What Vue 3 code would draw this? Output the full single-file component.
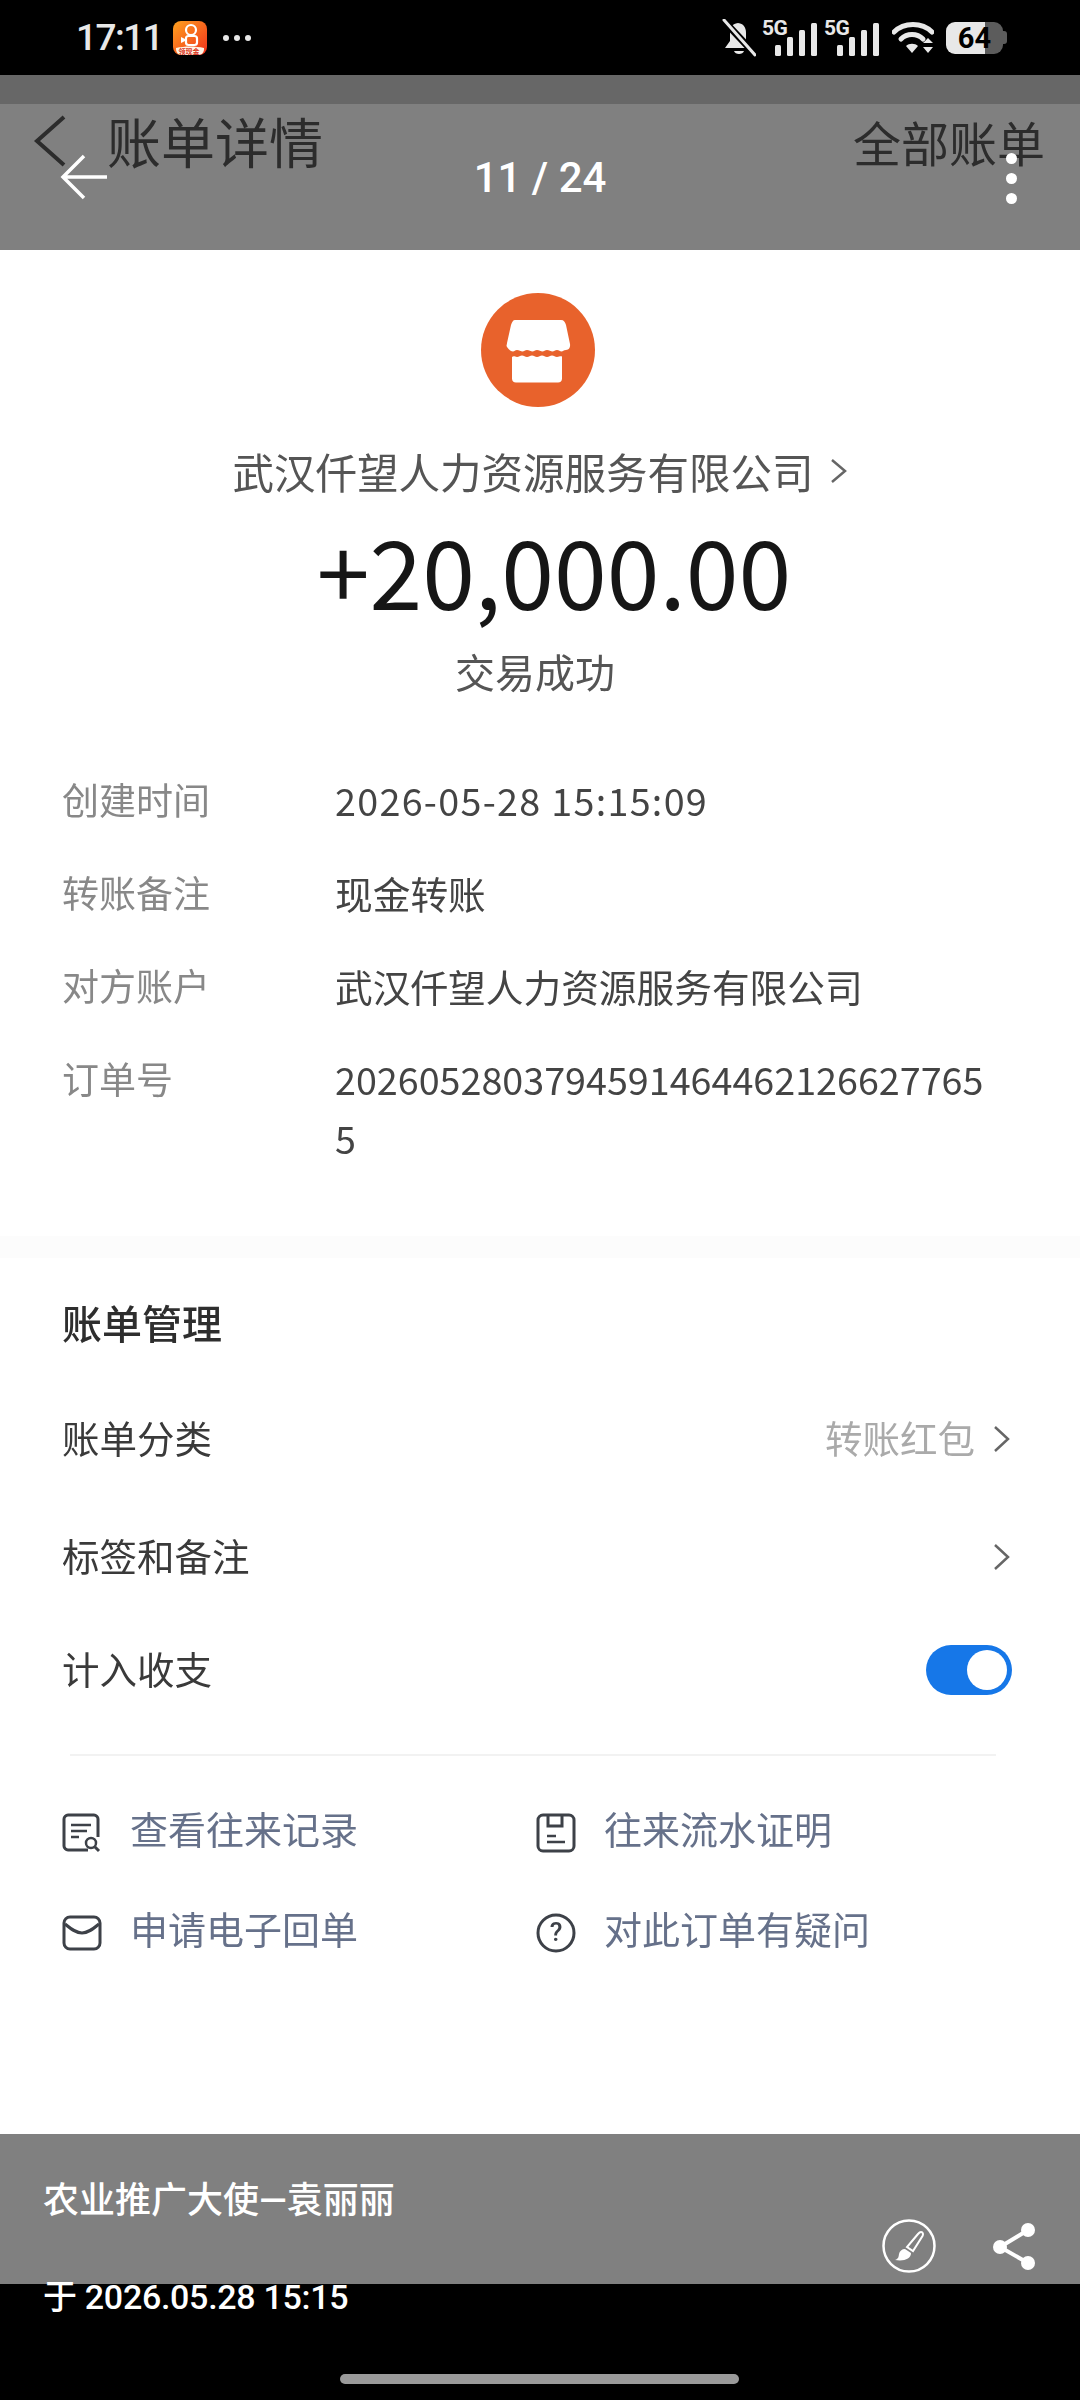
<script setup>
const details = [
  { label: '创建时间', value: '2026-05-28 15:15:09', wide: true },
  { label: '转账备注', value: '现金转账' },
  { label: '对方账户', value: '武汉仟望人力资源服务有限公司' },
  { label: '订单号', value: '20260528037945914644621266277655' }
]
</script>

<template>
  <div class="phone">
    <div class="status">
      <div class="status-left">
        <span class="clock">17:11</span>
        <svg class="app" viewBox="0 0 34 34">
          <defs>
            <linearGradient id="appg" x1="0" y1="0" x2="1" y2="1">
              <stop offset="0" stop-color="#ffa21f" />
              <stop offset="1" stop-color="#f0301c" />
            </linearGradient>
          </defs>
          <rect width="34" height="34" rx="8" fill="url(#appg)" />
          <circle cx="18" cy="9" r="5" fill="none" stroke="#fff" stroke-width="2.200" />
          <rect x="13" y="15" width="11" height="9" rx="2.500" fill="none" stroke="#fff" stroke-width="2.200" />
          <path d="M12 18l-4-2v6l4-2z" fill="#fff" />
          <path d="M3 27c9-2 19-2 28 0v1c0 3-2 6-6 6H9c-4 0-6-3-6-6z" fill="#fff4e6" />
          <text x="16" y="33" text-anchor="middle" class="app-label">领现金</text>
        </svg>
        <span class="more"><i></i><i></i><i></i></span>
      </div>
      <div class="status-right">
        <svg class="bell" viewBox="0 0 34 38">
          <path d="M17 4c-6 0-9 4-9 10v8l-5 7h26l-5-7v-8c0-6-3-10-9-10z" fill="#e8e8e8" />
          <path d="M12 32h10c-1 4-9 4-10 0z" fill="#e8e8e8" />
          <path d="M1 1l32 34" stroke="#000" stroke-width="7" />
          <path d="M2 1l31 35" stroke="#e8e8e8" stroke-width="3" stroke-linecap="round" />
        </svg>
        <div class="net">
          <span class="fiveg">5G</span>
          <svg class="bars" viewBox="0 0 42 33"><rect x="0" y="22" width="6" height="11" rx="1.5" /><rect x="12" y="14" width="6" height="19" rx="1.5" /><rect x="24" y="7" width="6" height="26" rx="1.5" /><rect x="36" y="0" width="6" height="33" rx="1.5" /></svg>
        </div>
        <div class="net">
          <span class="fiveg">5G</span>
          <svg class="bars" viewBox="0 0 42 33"><rect x="0" y="22" width="6" height="11" rx="1.5" /><rect x="12" y="14" width="6" height="19" rx="1.5" /><rect x="24" y="7" width="6" height="26" rx="1.5" /><rect x="36" y="0" width="6" height="33" rx="1.5" /></svg>
        </div>
        <svg class="wifi" viewBox="0 0 42 33">
          <path d="M2 11C12 1 30 1 40 11" fill="none" stroke="#e8e8e8" stroke-width="5" stroke-linecap="round" />
          <path d="M9 18c6-6 16-6 22 0" fill="none" stroke="#e8e8e8" stroke-width="5" stroke-linecap="round" />
          <path d="M14 25c3-3 9-3 12 0l-6 7z" fill="#e8e8e8" />
          <path d="M31 22l5-5 5 5zM31 26l5 6 5-6z" fill="#e8e8e8" />
        </svg>
        <div class="battery">
          <div class="batt-body"><span class="batt-num">64</span></div>
          <div class="batt-tip"></div>
        </div>
      </div>
    </div>

    <div class="dim-strip"></div>

    <header class="shot-head">
      <div class="shot-head-inner">
        <svg class="shot-back" viewBox="0 0 34 52"><path d="M31 2L4 26l27 24" fill="none" stroke="#2c2c2c" stroke-width="4" /></svg>
        <span class="shot-title">账单详情</span>
        <span class="shot-all">全部账单</span>
      </div>
    </header>

    <main class="shot">
      <section class="hero">
        <svg class="store" viewBox="0 0 114 114">
          <circle cx="57" cy="57" r="57" fill="#e8622c" />
          <path d="M34 27h46c3 0 4 2 5 5l4 19c.5 3-1 6-4 6-2.500 0-3 1.500-4.500 1.500S78 57 76 57s-3 1.500-4.500 1.500S68 57 66 57s-3 1.500-4.500 1.500S58 57 56 57s-3 1.500-4.500 1.500S48 57 46 57s-3 1.500-4.500 1.500S38 57 36 57s-2.500 1.500-4 1.500S28 57 26 54c-1-2 0-2 0-4l4-18c1-3 2-5 4-5z" fill="#fff" />
          <path d="M31 64c2-1.500 3 0 5 0s3-1.500 5-1.500 3 1.500 5 1.500 3-1.500 5-1.500 3 1.500 5 1.500 3-1.500 5-1.500 3 1.500 5 1.500 3-1.500 5-1.500 3 1.500 5 1.500 3-1 5-.5v22c0 2.500-1.500 4-4 4H35c-2.500 0-4-1.500-4-4z" fill="#fff" />
        </svg>
        <div class="company">
          <span>武汉仟望人力资源服务有限公司</span>
          <svg class="company-chev" viewBox="0 0 18 28"><path d="M2 3l13 11L2 25" fill="none" stroke="#666" stroke-width="2.500" /></svg>
        </div>
        <div class="amount">+20,000.00</div>
        <div class="result">交易成功</div>
      </section>

      <section class="details">
        <div v-for="d in details" :key="d.label" class="detail">
          <span class="detail-label">{{ d.label }}</span>
          <span class="detail-value" :class="{ wide: d.wide }">{{ d.value }}</span>
        </div>
      </section>

      <div class="band"></div>

      <section class="manage">
        <h2 class="manage-title">账单管理</h2>
        <div class="m-row">
          <span class="m-text">账单分类</span>
          <span class="m-right">
            <span class="m-value">转账红包</span>
            <svg class="chev" viewBox="0 0 20 30"><path d="M3 3l13 12L3 27" fill="none" stroke="#666" stroke-width="2.500" /></svg>
          </span>
        </div>
        <div class="m-row tags">
          <span class="m-text">标签和备注</span>
          <svg class="chev" viewBox="0 0 20 30"><path d="M3 3l13 12L3 27" fill="none" stroke="#666" stroke-width="2.500" /></svg>
        </div>
        <div class="m-row count">
          <span class="m-text">计入收支</span>
          <div class="toggle"><div class="knob"></div></div>
        </div>
        <div class="rule"></div>
        <div class="links">
          <div class="link">
            <svg class="l-icon" viewBox="0 0 40 40">
              <path d="M26 37H6c-2 0-4-2-4-4V6c0-2 2-4 4-4h26c2 0 4 2 4 4v18" fill="none" stroke="#3d4148" stroke-width="3" />
              <path d="M9 12h20M9 18h16M9 24h8" stroke="#3d4148" stroke-width="2.500" />
              <circle cx="29" cy="30" r="5" fill="#fff" stroke="#3d4148" stroke-width="2.500" />
              <path d="M33 34l4 4" stroke="#3d4148" stroke-width="3" />
            </svg>
            <span>查看往来记录</span>
          </div>
          <div class="link">
            <svg class="l-icon" viewBox="0 0 40 40">
              <rect x="2" y="2" width="36" height="36" rx="5" fill="none" stroke="#3d4148" stroke-width="3" />
              <path d="M12 2v11h14V2" fill="none" stroke="#3d4148" stroke-width="3" />
              <path d="M11 23h9M11 29h18" stroke="#3d4148" stroke-width="2.500" />
            </svg>
            <span>往来流水证明</span>
          </div>
          <div class="link">
            <svg class="l-icon" viewBox="0 0 40 40">
              <rect x="2" y="4" width="36" height="32" rx="6" fill="none" stroke="#3d4148" stroke-width="3" />
              <path d="M3 11c6 5 11 9 17 9s11-4 17-9" fill="none" stroke="#3d4148" stroke-width="3" />
            </svg>
            <span>申请电子回单</span>
          </div>
          <div class="link">
            <svg class="l-icon" viewBox="0 0 40 40">
              <circle cx="20" cy="20" r="18" fill="none" stroke="#3d4148" stroke-width="3" />
              <text x="20" y="28" text-anchor="middle" class="qmark">?</text>
            </svg>
            <span>对此订单有疑问</span>
          </div>
        </div>
      </section>
    </main>

    <footer class="viewer-foot"></footer>

    <!-- viewer chrome floating over the photographed page -->
    <svg class="v-back" viewBox="0 0 50 46"><path d="M47 23H4M24 2L3 23l21 21" fill="none" stroke="#fff" stroke-width="3.500" /></svg>
    <div class="v-count">11 / 24</div>
    <div class="v-dots"><i></i><i></i><i></i></div>
    <div class="v-caption">
      <div>农业推广大使—袁丽丽</div>
      <div class="v-date">于 2026.05.28 15:15</div>
    </div>
    <svg class="v-brush" viewBox="0 0 54 54">
      <circle cx="27" cy="27" r="25.500" fill="none" stroke="#fff" stroke-width="2.500" />
      <path d="M39 13c2 0 2.500 2 1.500 4L31 32l-6-4L36 15c1-1.200 2-2 3-2z" fill="none" stroke="#fff" stroke-width="2" />
      <path d="M23 30l6 4c0 6-7 8.500-16 7 4-1.500 3.500-3.500 4-6 .5-3 3-5 6-5z" fill="#fff" />
    </svg>
    <svg class="v-share" viewBox="0 0 50 54">
      <path d="M38 10L10 27l28 16" fill="none" stroke="#fff" stroke-width="4" />
      <circle cx="38" cy="10" r="7" fill="#fff" /><circle cx="10" cy="27" r="7" fill="#fff" /><circle cx="38" cy="43" r="7" fill="#fff" />
    </svg>
    <div class="home-bar"></div>
  </div>
</template>

<style>
html, body { margin: 0; background: #000; }
</style>

<style scoped>
.phone {
  position: relative;
  width: 1080px;
  height: 2400px;
  overflow: hidden;
  background: #000;
  display: flex;
  flex-direction: column;
  font-family: Roboto, "Noto Sans CJK SC", sans-serif;
}
.status {
  height: 75px;
  flex: none;
  display: flex;
  justify-content: space-between;
  align-items: center;
  padding: 0 73px 0 76px;
  color: #e8e8e8;
}
.status-left { display: flex; align-items: center; }
.clock { font-size: 37px; font-weight: 500; letter-spacing: -1.5px; width: 97px; }
.app { width: 34px; height: 34px; }
.app-label { font-size: 7px; font-weight: 700; fill: #d8341c; font-family: "Noto Sans CJK SC", sans-serif; }
.more { margin-left: 16px; display: flex; gap: 5px; }
.more i { display: block; width: 6px; height: 6px; border-radius: 50%; background: #e8e8e8; }
.status-right { display: flex; align-items: center; height: 40px; }
.bell { width: 34px; height: 38px; margin-right: 6px; }
.net { position: relative; width: 55px; height: 36px; margin-right: 7px; }
.fiveg { position: absolute; left: 0; top: -2px; font-size: 21px; font-weight: 700; line-height: 21px; letter-spacing: -0.5px; }
.bars { position: absolute; right: 0; top: 3px; width: 42px; height: 33px; fill: #e8e8e8; }
.wifi { width: 42px; height: 33px; margin-left: 6px; margin-right: 12px; }
.battery { display: flex; align-items: center; }
.batt-body {
  width: 57px;
  height: 32px;
  border-radius: 9px;
  background: linear-gradient(90deg, #e8e8e8 0 68%, #5c5c5c 68% 100%);
  display: flex;
  align-items: center;
  justify-content: center;
}
.batt-num { color: #000; font-size: 29px; font-weight: 700; line-height: 32px; }
.batt-tip { width: 4px; height: 13px; background: #5c5c5c; border-radius: 0 3px 3px 0; }

.dim-strip { height: 29px; flex: none; background: #676767; }
.shot-head { height: 146px; flex: none; background: #808080; }
.shot-head-inner {
  display: flex;
  align-items: center;
  height: 73px;
  padding: 0 35px 0 33px;
  color: #2c2c2c;
  filter: blur(0.7px);
  font-family: "Noto Sans CJK SC", sans-serif;
}
.shot-back { width: 34px; height: 52px; margin-right: 40px; }
.shot-title { font-size: 54px; }
.shot-all { margin-left: auto; font-size: 48px; }

.shot {
  height: 1884px;
  flex: none;
  background: #fff;
  display: flex;
  flex-direction: column;
  filter: blur(0.7px);
  color: #333;
  font-family: "Noto Sans CJK SC", sans-serif;
}
.hero { display: flex; flex-direction: column; align-items: center; padding-top: 43px; }
.store { width: 114px; height: 114px; display: block; margin-right: 4px; }
.company { display: flex; align-items: center; height: 60px; margin-top: 34px; font-size: 41.500px; color: #555; }
.company-chev { width: 18px; height: 28px; margin-left: 16px; }
.amount { height: 110px; line-height: 110px; margin-top: 13px; margin-left: 28px; font-size: 95px; color: #161616; font-weight: 400; }
.result { height: 50px; line-height: 50px; margin-top: 22px; margin-right: 10px; font-size: 40px; color: #555; }

.details { display: flex; flex-direction: column; gap: 34px; padding: 74px 84px 0 62px; }
.detail { display: flex; font-size: 37.700px; line-height: 59px; }
.detail-label { width: 273px; flex: none; color: #888; font-size: 37px; }
.detail-value { flex: 1; word-break: break-all; color: #444; }
.detail-value.wide { letter-spacing: 1.300px; }

.band { height: 22px; margin-top: 69px; background: #fcfcfc; flex: none; }
.manage { padding: 0 68px 0 62px; }
.manage-title { margin: 34px 0 0; height: 60px; line-height: 60px; font-size: 40px; font-weight: 500; color: #2e2e2e; }
.m-row { display: flex; align-items: center; justify-content: space-between; height: 60px; margin-top: 57px; font-size: 37.500px; color: #3a3a3a; }
.m-row.tags { margin-top: 58px; }
.m-row.count { margin-top: 53px; }
.m-text, .m-value { margin-top: -5px; }
.m-right { display: flex; align-items: center; }
.m-value { color: #aaa; }
.chev { width: 20px; height: 30px; margin-left: 17px; display: block; }
.toggle { width: 86px; height: 50px; border-radius: 25px; background: #1677e8; position: relative; }
.knob { position: absolute; right: 5px; top: 5px; width: 40px; height: 40px; border-radius: 50%; background: #fff; }
.rule { height: 2px; background: #f2f2f2; margin: 54px 16px 0 8px; }
.links {
  display: grid;
  grid-template-columns: 474px 1fr;
  row-gap: 40px;
  margin-top: 45px;
}
.link { display: flex; align-items: center; height: 60px; font-size: 38px; color: #66718a; }
.link span { margin-top: -8px; }
.l-icon { width: 40px; height: 40px; margin-right: 28px; margin-top: 4px; flex: none; }
.qmark { font-size: 26px; font-weight: 500; fill: #3d4148; font-family: Roboto, sans-serif; }

.viewer-foot { height: 150px; flex: none; background: #808080; }

.v-back { position: absolute; left: 60px; top: 154px; width: 50px; height: 46px; }
.v-count { position: absolute; left: 0; right: 0; top: 153px; text-align: center; color: #fff; font-size: 42px; line-height: 50px; font-weight: 500; }
.v-dots { position: absolute; left: 1006px; top: 153px; display: flex; flex-direction: column; gap: 9px; }
.v-dots i { display: block; width: 11px; height: 11px; border-radius: 50%; background: #fff; }
.v-caption { position: absolute; left: 43px; top: 2175px; color: #fff; font-size: 36px; line-height: 52px; font-weight: 500; }
.v-date { margin-top: 44px; font-size: 34px; letter-spacing: -0.3px; }
.v-brush { position: absolute; left: 882px; top: 2219px; width: 54px; height: 54px; }
.v-share { position: absolute; left: 990px; top: 2220px; width: 50px; height: 54px; }
.home-bar { position: absolute; left: 340px; top: 2374px; width: 399px; height: 10px; border-radius: 5px; background: #9a9a9a; }
</style>
